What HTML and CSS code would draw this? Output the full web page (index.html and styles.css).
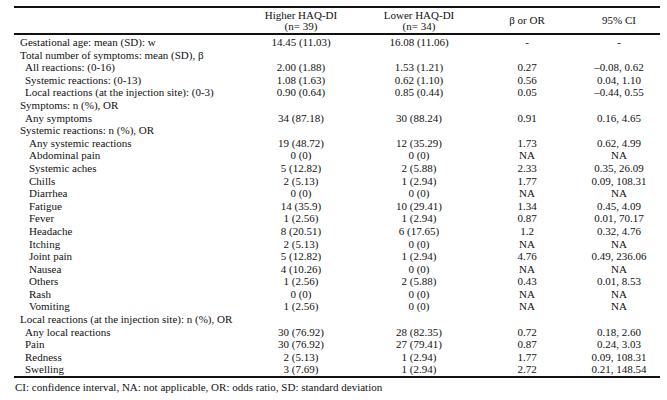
FILE: index.html
```html
<!DOCTYPE html>
<html>
<head>
<meta charset="utf-8">
<link rel="stylesheet" href="styles.css">
</head>
<body>
<div class="page">
<table class="tbl">
<colgroup>
<col class="c1"><col class="c2"><col class="c3"><col class="c4"><col class="c5">
</colgroup>
<thead>
<tr>
<th class="lbl"></th>
<th>Higher HAQ-DI<br>(n= 39)</th>
<th>Lower HAQ-DI<br>(n= 34)</th>
<th>β or OR</th>
<th>95% CI</th>
</tr>
</thead>
<tbody>
<tr class="first"><td class="lbl">Gestational age: mean (SD): w</td><td>14.45 (11.03)</td><td>16.08 (11.06)</td><td>-</td><td>-</td></tr>
<tr><td class="lbl">Total number of symptoms: mean (SD), β</td><td></td><td></td><td></td><td></td></tr>
<tr><td class="lbl in1">All reactions: (0-16)</td><td>2.00 (1.88)</td><td>1.53 (1.21)</td><td>0.27</td><td>–0.08, 0.62</td></tr>
<tr><td class="lbl in1">Systemic reactions: (0-13)</td><td>1.08 (1.63)</td><td>0.62 (1.10)</td><td>0.56</td><td>0.04, 1.10</td></tr>
<tr><td class="lbl in1">Local reactions (at the injection site): (0-3)</td><td>0.90 (0.64)</td><td>0.85 (0.44)</td><td>0.05</td><td>–0.44, 0.55</td></tr>
<tr><td class="lbl">Symptoms: n (%), OR</td><td></td><td></td><td></td><td></td></tr>
<tr><td class="lbl in1">Any symptoms</td><td>34 (87.18)</td><td>30 (88.24)</td><td>0.91</td><td>0.16, 4.65</td></tr>
<tr><td class="lbl">Systemic reactions: n (%), OR</td><td></td><td></td><td></td><td></td></tr>
<tr><td class="lbl in2">Any systemic reactions</td><td>19 (48.72)</td><td>12 (35.29)</td><td>1.73</td><td>0.62, 4.99</td></tr>
<tr><td class="lbl in2">Abdominal pain</td><td>0 (0)</td><td>0 (0)</td><td>NA</td><td>NA</td></tr>
<tr><td class="lbl in2">Systemic aches</td><td>5 (12.82)</td><td>2 (5.88)</td><td>2.33</td><td>0.35, 26.09</td></tr>
<tr><td class="lbl in2">Chills</td><td>2 (5.13)</td><td>1 (2.94)</td><td>1.77</td><td>0.09, 108.31</td></tr>
<tr><td class="lbl in2">Diarrhea</td><td>0 (0)</td><td>0 (0)</td><td>NA</td><td>NA</td></tr>
<tr><td class="lbl in2">Fatigue</td><td>14 (35.9)</td><td>10 (29.41)</td><td>1.34</td><td>0.45, 4.09</td></tr>
<tr><td class="lbl in2">Fever</td><td>1 (2.56)</td><td>1 (2.94)</td><td>0.87</td><td>0.01, 70.17</td></tr>
<tr><td class="lbl in2">Headache</td><td>8 (20.51)</td><td>6 (17.65)</td><td>1.2</td><td>0.32, 4.76</td></tr>
<tr><td class="lbl in2">Itching</td><td>2 (5.13)</td><td>0 (0)</td><td>NA</td><td>NA</td></tr>
<tr><td class="lbl in2">Joint pain</td><td>5 (12.82)</td><td>1 (2.94)</td><td>4.76</td><td>0.49, 236.06</td></tr>
<tr><td class="lbl in2">Nausea</td><td>4 (10.26)</td><td>0 (0)</td><td>NA</td><td>NA</td></tr>
<tr><td class="lbl in2">Others</td><td>1 (2.56)</td><td>2 (5.88)</td><td>0.43</td><td>0.01, 8.53</td></tr>
<tr><td class="lbl in2">Rash</td><td>0 (0)</td><td>0 (0)</td><td>NA</td><td>NA</td></tr>
<tr><td class="lbl in2">Vomiting</td><td>1 (2.56)</td><td>0 (0)</td><td>NA</td><td>NA</td></tr>
<tr><td class="lbl">Local reactions (at the injection site): n (%), OR</td><td></td><td></td><td></td><td></td></tr>
<tr><td class="lbl in1">Any local reactions</td><td>30 (76.92)</td><td>28 (82.35)</td><td>0.72</td><td>0.18, 2.60</td></tr>
<tr><td class="lbl in1">Pain</td><td>30 (76.92)</td><td>27 (79.41)</td><td>0.87</td><td>0.24, 3.03</td></tr>
<tr><td class="lbl in1">Redness</td><td>2 (5.13)</td><td>1 (2.94)</td><td>1.77</td><td>0.09, 108.31</td></tr>
<tr class="last"><td class="lbl in1">Swelling</td><td>3 (7.69)</td><td>1 (2.94)</td><td>2.72</td><td>0.21, 148.54</td></tr>
</tbody>
</table>
<p class="note">CI: confidence interval, NA: not applicable, OR: odds ratio, SD: standard deviation</p>
</div>
</body>
</html>
```

FILE: styles.css
```css
html, body {
  margin: 0;
  padding: 0;
  background: #ffffff;
}

.page {
  padding: 6px 0 0 14px;
  width: 646px;
  font-family: "Liberation Serif", Tinos, "Times New Roman", Times, serif;
  font-size: 11px;
  color: #111;
}

.tbl {
  width: 646px;
  border-collapse: collapse;
  table-layout: fixed;
  border-top: 2px solid #111;
  border-bottom: 2px solid #111;
  font-family: "Liberation Serif", Tinos, "Times New Roman", Times, serif;
  font-size: 11px;
}

.c1 { width: 226px; }
.c2 { width: 122px; }
.c3 { width: 114px; }
.c4 { width: 102px; }
.c5 { width: 82px; }

.tbl th {
  font-weight: normal;
  line-height: 10.5px;
  padding: 2px 0 2px;
  text-align: center;
  vertical-align: middle;
  border-bottom: 2px solid #111;
}

.tbl td {
  padding: 0;
  line-height: 12.6px;
  text-align: center;
  white-space: nowrap;
}

.tbl td.lbl {
  text-align: left;
  padding-left: 6px;
}

.tbl td.in1 { padding-left: 11px; }
.tbl td.in2 { padding-left: 15px; }

.tbl tr.first td { padding-top: 1px; }

.note {
  margin: 0;
  padding: 2px 0 0 1px;
  line-height: 14px;
}
```
